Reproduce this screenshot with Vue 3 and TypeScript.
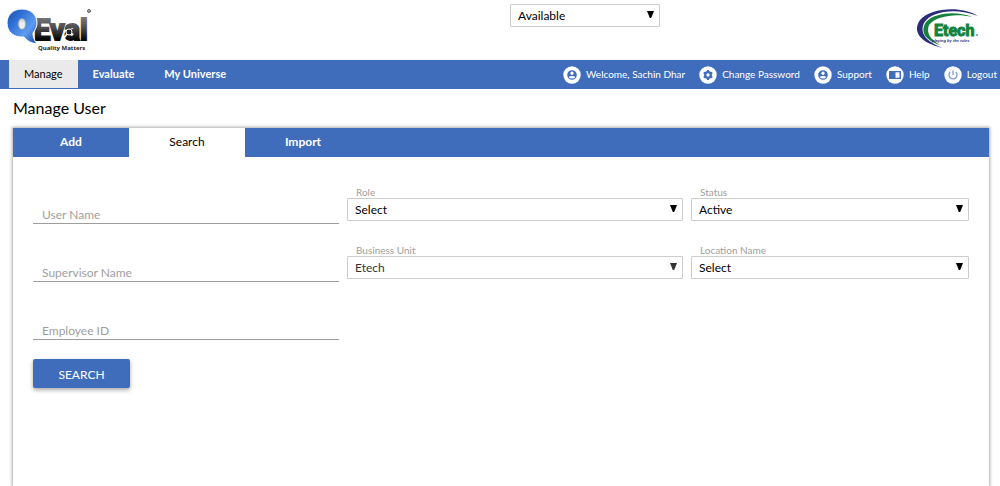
<script setup lang="ts">
import { ref } from 'vue'

interface SelectField {
  id: string
  label: string
  options: string[]
  muted?: boolean
}
interface TextField {
  id: string
  label: string
}

const mainMenu: string[] = ['Manage', 'Evaluate', 'My Universe']
const tabs: string[] = ['Add', 'Search', 'Import']
const activeMenu = ref('Manage')
const activeTab = ref('Search')
const availability = ref('Available')

const userLinks = [
  { label: 'Welcome, Sachin Dhar', icon: 'user' },
  { label: 'Change Password', icon: 'gear' },
  { label: 'Support', icon: 'user' },
  { label: 'Help', icon: 'book' },
  { label: 'Logout', icon: 'power' },
]

const rows: { text: TextField; selects: SelectField[] }[] = [
  {
    text: { id: 'user-name', label: 'User Name' },
    selects: [
      { id: 'role', label: 'Role', options: ['Select'] },
      { id: 'status', label: 'Status', options: ['Active', 'Inactive'] },
    ],
  },
  {
    text: { id: 'supervisor-name', label: 'Supervisor Name' },
    selects: [
      { id: 'business-unit', label: 'Business Unit', options: ['Etech'], muted: true },
      { id: 'location-name', label: 'Location Name', options: ['Select'] },
    ],
  },
  { text: { id: 'employee-id', label: 'Employee ID' }, selects: [] },
]
</script>

<template>
  <div class="page">
    <header class="top">
      <a href="#" class="brand" aria-label="QEval Quality Matters">
        <svg width="88" height="50" viewBox="0 0 88 50">
          <defs>
            <linearGradient id="bubble" x1="0" y1="0" x2="1" y2="1">
              <stop offset="0" stop-color="#1c50ae" />
              <stop offset="0.3" stop-color="#2f6fd4" />
              <stop offset="0.65" stop-color="#5d9cf0" />
              <stop offset="1" stop-color="#1546a0" />
            </linearGradient>
            <linearGradient id="metal" x1="0" y1="0" x2="0" y2="1">
              <stop offset="0" stop-color="#8a8a8a" />
              <stop offset="0.45" stop-color="#4a4a4a" />
              <stop offset="0.75" stop-color="#0c0c0c" />
              <stop offset="1" stop-color="#000" />
            </linearGradient>
          </defs>
          <text class="brand-word" x="28" y="36" fill="url(#metal)" stroke="url(#metal)">Eval</text>
          <path d="M16 5C25 5 31 11 31 19C31 23 29 26 27 29C27 33 28 36 31 40C25 39 21 37 18 33C8 34 1 28 1 19C1 11 7 5 16 5Z" fill="url(#bubble)" stroke="#fff" stroke-width="1" />
          <ellipse cx="16" cy="20" rx="4" ry="5.5" fill="#d5d9de" stroke="#8193b5" />
          <ellipse cx="16" cy="21" rx="2.5" ry="3.5" fill="#eee" />
          <circle cx="63" cy="28" r="3" fill="#222" stroke="#fff" stroke-width="1" />
          <path d="M61 30L58 34" stroke="#fff" stroke-width="1.5" />
          <circle cx="83" cy="7" r="1.5" fill="#aaa" stroke="#666" />
          <text class="brand-sub" x="32" y="46">Quality Matters</text>
        </svg>
      </a>
      <div class="select-box">
        <select v-model="availability" aria-label="Availability">
          <option>Available</option>
          <option>Away</option>
        </select>
        <svg class="arrow" width="7" height="7" viewBox="0 0 7 7"><path d="M0 0H7L4.2 7H2.8Z" /></svg>
      </div>
      <a href="#" class="partner" aria-label="Etech">
        <svg width="64" height="42" viewBox="0 0 64 42">
          <path d="M62 8C47 -2 15 -1 4 12C-5 25 7 36 27 40C11 34 3 26 8 15C16 2 42 0 62 8Z" fill="#2b2d78" />
          <path d="M56 9C42 3 19 4 10 14C3 25 11 33 24 37C14 31 10 25 13 17C20 8 40 5 56 9Z" fill="#15823b" />
          <text class="etech-word" x="18" y="28">Etech</text>
          <circle cx="61" cy="27" r="1" fill="#5e9b75" />
          <text class="etech-sub" x="16" y="34">playing by the rules</text>
        </svg>
      </a>
    </header>

    <nav class="bar" aria-label="Main">
      <div class="menu">
        <a
          v-for="item in mainMenu"
          :key="item"
          href="#"
          :class="{ active: item === activeMenu }"
          @click.prevent="activeMenu = item"
        >{{ item }}</a>
      </div>
      <div class="links">
        <a v-for="link in userLinks" :key="link.label" href="#">
          <svg width="18" height="18" viewBox="0 0 18 18">
            <circle cx="9" cy="9" r="8.7" fill="#fff" />
            <g v-if="link.icon === 'user'" fill="#3f6dbc">
              <path fill-rule="evenodd" d="M9 4.2A4.8 4.8 0 1 0 9 13.8A4.8 4.8 0 1 0 9 4.2ZM9 5.6A1.7 1.7 0 1 1 9 9A1.7 1.7 0 1 1 9 5.6ZM9 12.6C7.5 12.6 6.4 12 5.8 11C6.4 10.2 7.8 9.9 9 9.9S11.6 10.2 12.2 11C11.6 12 10.5 12.6 9 12.6Z" />
            </g>
            <g v-else-if="link.icon === 'gear'" fill="none" stroke="#3f6dbc">
              <circle cx="9" cy="9" r="2.8" stroke-width="2.3" />
              <path d="M9 4V6M9 12V14M4.7 6.5L6.4 7.5M11.6 10.5L13.3 11.5M4.7 11.5L6.4 10.5M11.6 7.5L13.3 6.5" stroke-width="2" />
            </g>
            <g v-else-if="link.icon === 'book'">
              <rect x="3" y="5" width="12" height="8" rx="0.5" fill="#3f6dbc" />
              <rect x="9.5" y="6.3" width="4" height="5.4" fill="#fff" />
            </g>
            <path v-else d="M9 4.5V9M6.2 6A4 4 0 1 0 11.8 6" fill="none" stroke="#7d9bd0" stroke-width="1.3" />
          </svg>
          <span>{{ link.label }}</span>
        </a>
      </div>
    </nav>

    <main class="content">
      <h1>Manage User</h1>
      <section class="panel">
        <div class="tabs" role="tablist">
          <button
            v-for="tab in tabs"
            :key="tab"
            type="button"
            role="tab"
            :aria-selected="tab === activeTab"
            :class="{ active: tab === activeTab }"
            @click="activeTab = tab"
          >{{ tab }}</button>
        </div>
        <form class="form" @submit.prevent>
          <div v-for="row in rows" :key="row.text.id" class="row">
            <div class="text-field">
              <input :id="row.text.id" type="text" :placeholder="row.text.label" :aria-label="row.text.label" />
            </div>
            <div v-for="field in row.selects" :key="field.id" class="select-field">
              <label :for="field.id">{{ field.label }}</label>
              <div class="select-box" :class="{ muted: field.muted }">
                <select :id="field.id">
                  <option v-for="option in field.options" :key="option">{{ option }}</option>
                </select>
                <svg class="arrow" width="7" height="7" viewBox="0 0 7 7"><path d="M0 0H7L4.2 7H2.8Z" /></svg>
              </div>
            </div>
          </div>
          <button type="submit" class="submit">SEARCH</button>
        </form>
      </section>
    </main>
  </div>
</template>

<style>
body {
  background: #fff;
}
</style>

<style scoped>
.page {
  display: flex;
  flex-direction: column;
  min-height: 100vh;
  overflow: hidden;
  font-family: Lato, sans-serif;
  color: #000;
}
.page * {
  box-sizing: border-box;
}
a {
  color: inherit;
  text-decoration: none;
}
svg {
  display: block;
  flex: none;
}
button,
input,
select {
  font-family: inherit;
}
.top {
  display: grid;
  grid-template-columns: 504fr 150px 320fr;
  align-items: start;
  height: 60px;
  padding: 4px 20px 0 6px;
}
.partner {
  justify-self: end;
  padding-top: 4px;
}
.brand-word {
  font: 700 29px Roboto, sans-serif;
  stroke-width: 2px;
}
.brand-sub {
  font: 700 6px "Open Sans", sans-serif;
  fill: #222;
}
.etech-word {
  font: 700 16px Roboto, sans-serif;
  fill: #15823b;
  stroke: #15823b;
  stroke-width: 1px;
}
.etech-sub {
  font: italic 700 4px "Liberation Sans", sans-serif;
  fill: #2b2d78;
}
.bar {
  display: flex;
  justify-content: space-between;
  height: 29px;
  padding: 0 3px 0 9px;
  background: #3f6dbc;
  color: #fff;
  font-size: 11px;
  line-height: 28px;
}
.menu {
  display: flex;
  font-weight: 700;
}
.menu a {
  height: 28px;
  padding: 0 15px;
}
.menu .active {
  background: #eaeaea;
  color: #000;
  font-weight: 400;
}
.links {
  display: flex;
  gap: 14px;
  font-size: 10px;
}
.links a {
  display: flex;
  align-items: center;
  gap: 5px;
}
.links span {
  padding-bottom: 1px;
}
.content {
  display: flex;
  flex: 1;
  flex-direction: column;
  padding: 0 11px 0 13px;
}
h1 {
  margin: 0;
  padding: 9px 0 10px;
  font-size: 16px;
  font-weight: 400;
  line-height: 20px;
}
.panel {
  flex: 1;
  box-shadow: 0 0 3px 1px #aaa;
}
.tabs {
  display: flex;
  background: #3f6dbc;
}
.tabs button {
  width: 116px;
  height: 29px;
  padding: 0 0 2px;
  border: 0;
  background: transparent;
  color: #fff;
  font-size: 12px;
  font-weight: 700;
}
.tabs .active {
  background: #fff;
  color: #000;
  font-weight: 400;
}
.form {
  padding: 28px 20px 0;
}
.row {
  display: grid;
  grid-template-columns: 306fr 336fr 278fr;
  gap: 8px;
  height: 58px;
}
.text-field {
  padding-top: 19px;
}
.text-field input {
  display: block;
  width: 100%;
  height: 20px;
  padding: 2px 9px 0;
  border: 0;
  border-bottom: 1px solid #9e9e9e;
  background: transparent;
  font-size: 12px;
  outline: 0;
}
.text-field input::placeholder {
  color: #9e9e9e;
  opacity: 1;
}
.select-field label {
  display: block;
  height: 13px;
  padding-left: 9px;
  color: #9e9e9e;
  font-size: 10px;
  line-height: 14px;
}
.select-box {
  position: relative;
}
.select-box select {
  display: block;
  width: 100%;
  height: 23px;
  padding: 0 7px;
  border: 1px solid #ccc;
  border-radius: 1px;
  background: #fff;
  appearance: none;
  color: #000;
  font-size: 12px;
}
.arrow {
  position: absolute;
  top: 7px;
  right: 6px;
  pointer-events: none;
}
.muted select {
  color: #333;
}
.muted .arrow {
  fill: #333;
}
.submit {
  min-width: 97px;
  height: 29px;
  margin-bottom: 20px;
  padding: 2px 25px 0;
  border: 0;
  border-radius: 2px;
  background: #3f6dbc;
  box-shadow: 0 2px 4px rgba(0, 0, 0, 0.35);
  color: #fff;
  font-size: 12px;
}
</style>
